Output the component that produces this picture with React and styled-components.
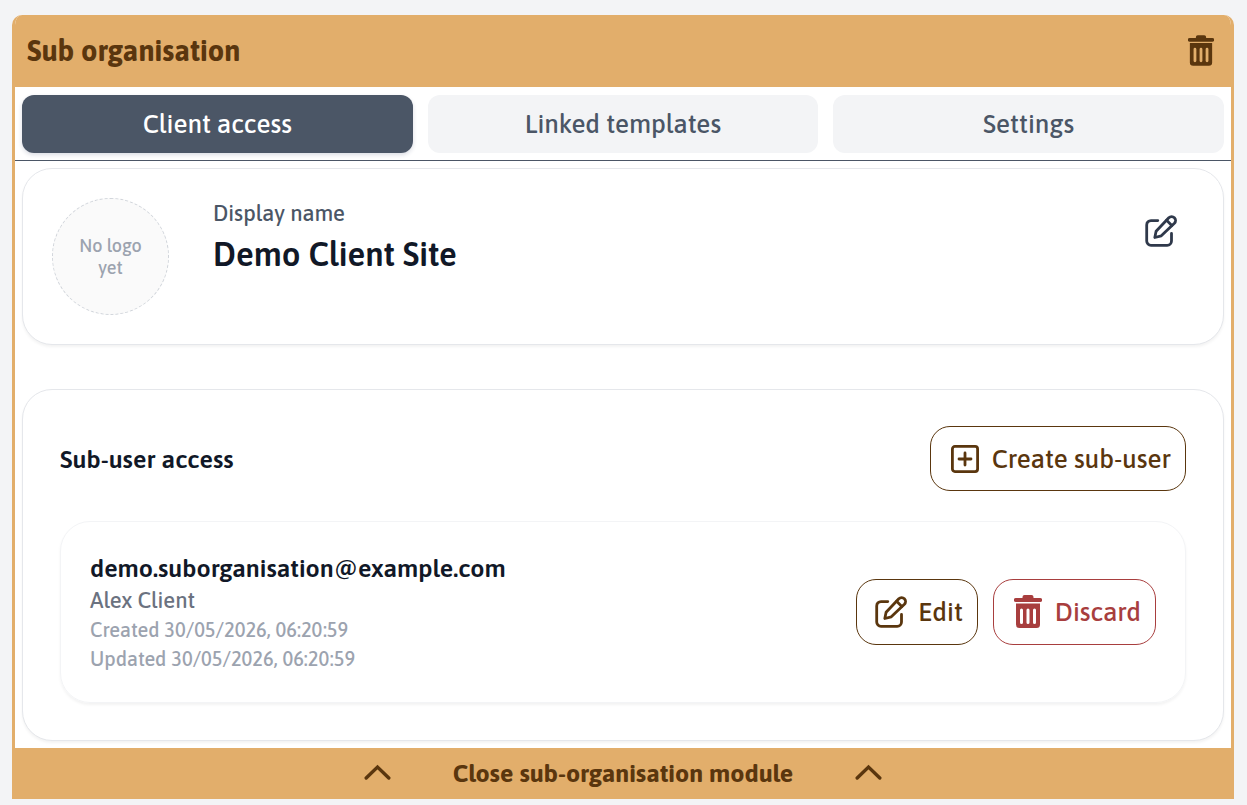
import React from "react";
import styled, { createGlobalStyle, ThemeProvider } from "styled-components";

const theme = {
  sand: "#e2ae6b",
  brown: "#5a360e",
  slate: "#4b5666",
  ink: "#111827",
  icon: "#2f394b",
  danger: "#a83e3e",
};

const GlobalStyle = createGlobalStyle`
  * {
    box-sizing: border-box;
  }

  body {
    margin: 0;
    background: #f3f4f6;
    font-family: Asap, "Noto Sans", sans-serif;
  }

  h1, h2, h3, p, dl, dt, dd, ul {
    margin: 0;
    padding: 0;
  }

  button {
    font-family: inherit;
    cursor: pointer;
  }

  svg {
    display: block;
    flex-shrink: 0;
  }
`;

const Page = styled.div`
  padding: 15px 13px 6px 12px;
`;

const Module = styled.section`
  border: 3px solid ${props => props.theme.sand};
  border-width: 0 3px;
  border-radius: 10px 10px 0 0;
  background: #fff;
  overflow: hidden;
`;

const Header = styled.header`
  display: flex;
  align-items: center;
  justify-content: space-between;
  height: 72px;
  padding: 0 17px 0 12px;
  background: ${props => props.theme.sand};
  color: ${props => props.theme.brown};
`;

const Title = styled.h1`
  font-size: 29px;
  line-height: 36px;
  font-weight: 700;
`;

const IconButton = styled.button`
  display: flex;
  padding: 0;
  border: 0;
  background: none;
  color: ${props => props.theme[props.$tone]};
`;

const Tabs = styled.div`
  display: grid;
  grid-template-columns: repeat(3, 1fr);
  gap: 15px;
  padding: 8px 7px 7px;
  border-bottom: 1px solid ${props => props.theme.slate};
`;

const Tab = styled.button`
  height: 58px;
  border: 0;
  border-radius: 12px;
  font-size: 26px;
  line-height: 36px;
  font-weight: 500;
  background: ${props => (props.$active ? props.theme.slate : "#f3f4f6")};
  color: ${props => (props.$active ? "#fff" : props.theme.slate)};
  box-shadow: ${props =>
    props.$active ? "0 2px 4px rgba(30, 41, 90, 0.16)" : "none"};
`;

const Body = styled.div`
  display: flex;
  flex-direction: column;
  gap: 44px;
  padding: 7px;
`;

const Card = styled.section`
  border: 1px solid #e5e7eb;
  border-radius: 30px;
  background: #fff;
  box-shadow: 0 2px 3px rgba(0, 0, 0, 0.05);
`;

const ProfileCard = styled(Card)`
  display: flex;
  align-items: flex-start;
  padding: 29px 46px 29px 29px;
`;

const LogoPlaceholder = styled.div`
  display: flex;
  align-items: center;
  justify-content: center;
  width: 117px;
  height: 117px;
  padding: 0 20px;
  border: 1px dashed #d1d5db;
  border-radius: 50%;
  background: #fafafa;
  color: #9ca3af;
  font-size: 18px;
  line-height: 22px;
  font-weight: 500;
  text-align: center;
`;

const Profile = styled.dl`
  flex: 1;
  margin-left: 44px;
`;

const ProfileLabel = styled.dt`
  color: ${props => props.theme.slate};
  font-size: 22px;
  line-height: 30px;
  font-weight: 500;
`;

const ProfileName = styled.dd`
  margin-top: 4px;
  color: ${props => props.theme.ink};
  font-size: 33px;
  line-height: 44px;
  font-weight: 600;
`;

const EditSlot = styled.div`
  padding-top: 17px;
`;

const AccessCard = styled(Card)`
  padding: 36px 37px 37px;
`;

const AccessHeader = styled.div`
  display: flex;
  align-items: center;
  justify-content: space-between;
  margin-bottom: 30px;
`;

const AccessTitle = styled.h2`
  color: ${props => props.theme.ink};
  font-size: 25px;
  line-height: 36px;
  font-weight: 600;
`;

const ActionButton = styled.button`
  display: flex;
  align-items: center;
  gap: 11px;
  height: ${props => (props.$tall ? 66 : 65)}px;
  padding: 0 14px 0 18px;
  border: 1px solid currentColor;
  border-radius: 20px;
  background: #fff;
  color: ${props => props.theme[props.$tone]};
  font-size: 26px;
  line-height: 36px;
  font-weight: 500;
`;

const ActionIcon = styled.span`
  display: flex;
  justify-content: center;
  width: 32px;
`;

const UserRow = styled.li`
  display: flex;
  align-items: center;
  justify-content: space-between;
  padding: 29px;
  border: 1px solid #f3f4f6;
  border-radius: 30px;
  box-shadow: 0 2px 3px rgba(0, 0, 0, 0.05);
`;

const Users = styled.ul`
  list-style: none;
`;

const Email = styled.h3`
  color: ${props => props.theme.ink};
  font-size: 25px;
  line-height: 35px;
  font-weight: 600;
`;

const UserName = styled.p`
  color: #6b7280;
  font-size: 22px;
  line-height: 29px;
  font-weight: 500;
`;

const Stamp = styled.p`
  color: #9ca3af;
  font-size: 20px;
  line-height: 29px;
  font-weight: 500;
`;

const Actions = styled.div`
  display: flex;
  gap: 15px;
`;

const CloseBar = styled.button`
  display: flex;
  align-items: center;
  justify-content: center;
  gap: 62px;
  width: 100%;
  height: 51px;
  padding: 0 0 2px;
  border: 0;
  background: ${props => props.theme.sand};
  color: ${props => props.theme.brown};
  font-size: 25px;
  line-height: 36px;
  font-weight: 700;
`;

const TrashIcon = ({ width, height }) => (
  <svg width={width} height={height} viewBox="0 0 28 34" aria-hidden="true">
    <path
      fill="currentColor"
      d="M8.500 3V2a2 2 0 0 1 2-2h7a2 2 0 0 1 2 2v1h6.700a1.800 1.800 0 0 1 0 4H1.800a1.800 1.800 0 0 1 0-4z"
    />
    <path
      fill="currentColor"
      fillRule="evenodd"
      d="M2 8.500h24v21a3.500 3.500 0 0 1-3.500 3.500h-17A3.500 3.500 0 0 1 2 29.500zM7.500 13.500a1.500 1.500 0 0 0-1.500 1.500v12.500a1.500 1.500 0 0 0 3 0V15A1.500 1.500 0 0 0 7.500 13.500zM14 13.500a1.500 1.500 0 0 0-1.500 1.500v12.500a1.500 1.500 0 0 0 3 0V15A1.500 1.500 0 0 0 14 13.500zM20.500 13.500a1.500 1.500 0 0 0-1.500 1.500v12.500a1.500 1.500 0 0 0 3 0V15A1.500 1.500 0 0 0 20.500 13.500z"
    />
  </svg>
);

const EditIcon = () => (
  <svg
    width="32"
    height="32"
    viewBox="0 0 32 32"
    fill="none"
    stroke="currentColor"
    strokeWidth="2.800"
    strokeLinecap="round"
    strokeLinejoin="round"
    aria-hidden="true"
  >
    <path d="M12.800 5.600H6a4.300 4.300 0 0 0-4.300 4.300V26A4.300 4.300 0 0 0 6 30.300h16.200a4.300 4.300 0 0 0 4.300-4.300v-7.500" />
    <path d="M9.800 22.500l1.300-6.200L23.800 2.700a3.900 3.900 0 0 1 5.600 5.600L16.300 20.800z" />
    <path d="M21.600 5.300l5.200 5.200" />
  </svg>
);

const PlusIcon = () => (
  <svg
    width="28"
    height="28"
    viewBox="0 0 28 28"
    fill="none"
    stroke="currentColor"
    strokeWidth="2.800"
    strokeLinecap="round"
    aria-hidden="true"
  >
    <rect x="1.400" y="1.400" width="25.200" height="25.200" rx="2.500" />
    <path d="M14 8v12M8 14h12" />
  </svg>
);

const ChevronIcon = () => (
  <svg
    width="27"
    height="20"
    viewBox="0 0 27 20"
    fill="none"
    stroke="currentColor"
    strokeWidth="3.400"
    strokeLinecap="round"
    aria-hidden="true"
  >
    <path d="M2.200 15L13.500 4l11.300 11" />
  </svg>
);

const tabs = ["Client access", "Linked templates", "Settings"];

const users = [
  {
    email: "demo.suborganisation@example.com",
    name: "Alex Client",
    created: "30/05/2026, 06:20:59",
    updated: "30/05/2026, 06:20:59",
  },
];

export default function App() {
  const [active, setActive] = React.useState(tabs[0]);

  return (
    <ThemeProvider theme={theme}>
      <GlobalStyle />
      <Page>
        <Module>
          <Header>
            <Title>Sub organisation</Title>
            <IconButton type="button" $tone="brown" aria-label="Delete">
              <TrashIcon width={26} height={32} />
            </IconButton>
          </Header>
          <Tabs role="tablist">
            {tabs.map(tab => (
              <Tab
                key={tab}
                type="button"
                role="tab"
                aria-selected={tab === active}
                $active={tab === active}
                onClick={() => setActive(tab)}
              >
                {tab}
              </Tab>
            ))}
          </Tabs>
          <Body>
            <ProfileCard>
              <LogoPlaceholder>No logo yet</LogoPlaceholder>
              <Profile>
                <ProfileLabel>Display name</ProfileLabel>
                <ProfileName>Demo Client Site</ProfileName>
              </Profile>
              <EditSlot>
                <IconButton
                  type="button"
                  $tone="icon"
                  aria-label="Edit display name"
                >
                  <EditIcon />
                </IconButton>
              </EditSlot>
            </ProfileCard>
            <AccessCard>
              <AccessHeader>
                <AccessTitle>Sub-user access</AccessTitle>
                <ActionButton type="button" $tone="brown">
                  <ActionIcon>
                    <PlusIcon />
                  </ActionIcon>
                  Create sub-user
                </ActionButton>
              </AccessHeader>
              <Users>
                {users.map(user => (
                  <UserRow key={user.email}>
                    <div>
                      <Email>{user.email}</Email>
                      <UserName>{user.name}</UserName>
                      <Stamp>Created {user.created}</Stamp>
                      <Stamp>Updated {user.updated}</Stamp>
                    </div>
                    <Actions>
                      <ActionButton type="button" $tone="brown" $tall>
                        <ActionIcon>
                          <EditIcon />
                        </ActionIcon>
                        Edit
                      </ActionButton>
                      <ActionButton type="button" $tone="danger" $tall>
                        <ActionIcon>
                          <TrashIcon width={28} height={34} />
                        </ActionIcon>
                        Discard
                      </ActionButton>
                    </Actions>
                  </UserRow>
                ))}
              </Users>
            </AccessCard>
          </Body>
          <CloseBar type="button">
            <ChevronIcon />
            Close sub-organisation module
            <ChevronIcon />
          </CloseBar>
        </Module>
      </Page>
    </ThemeProvider>
  );
}
